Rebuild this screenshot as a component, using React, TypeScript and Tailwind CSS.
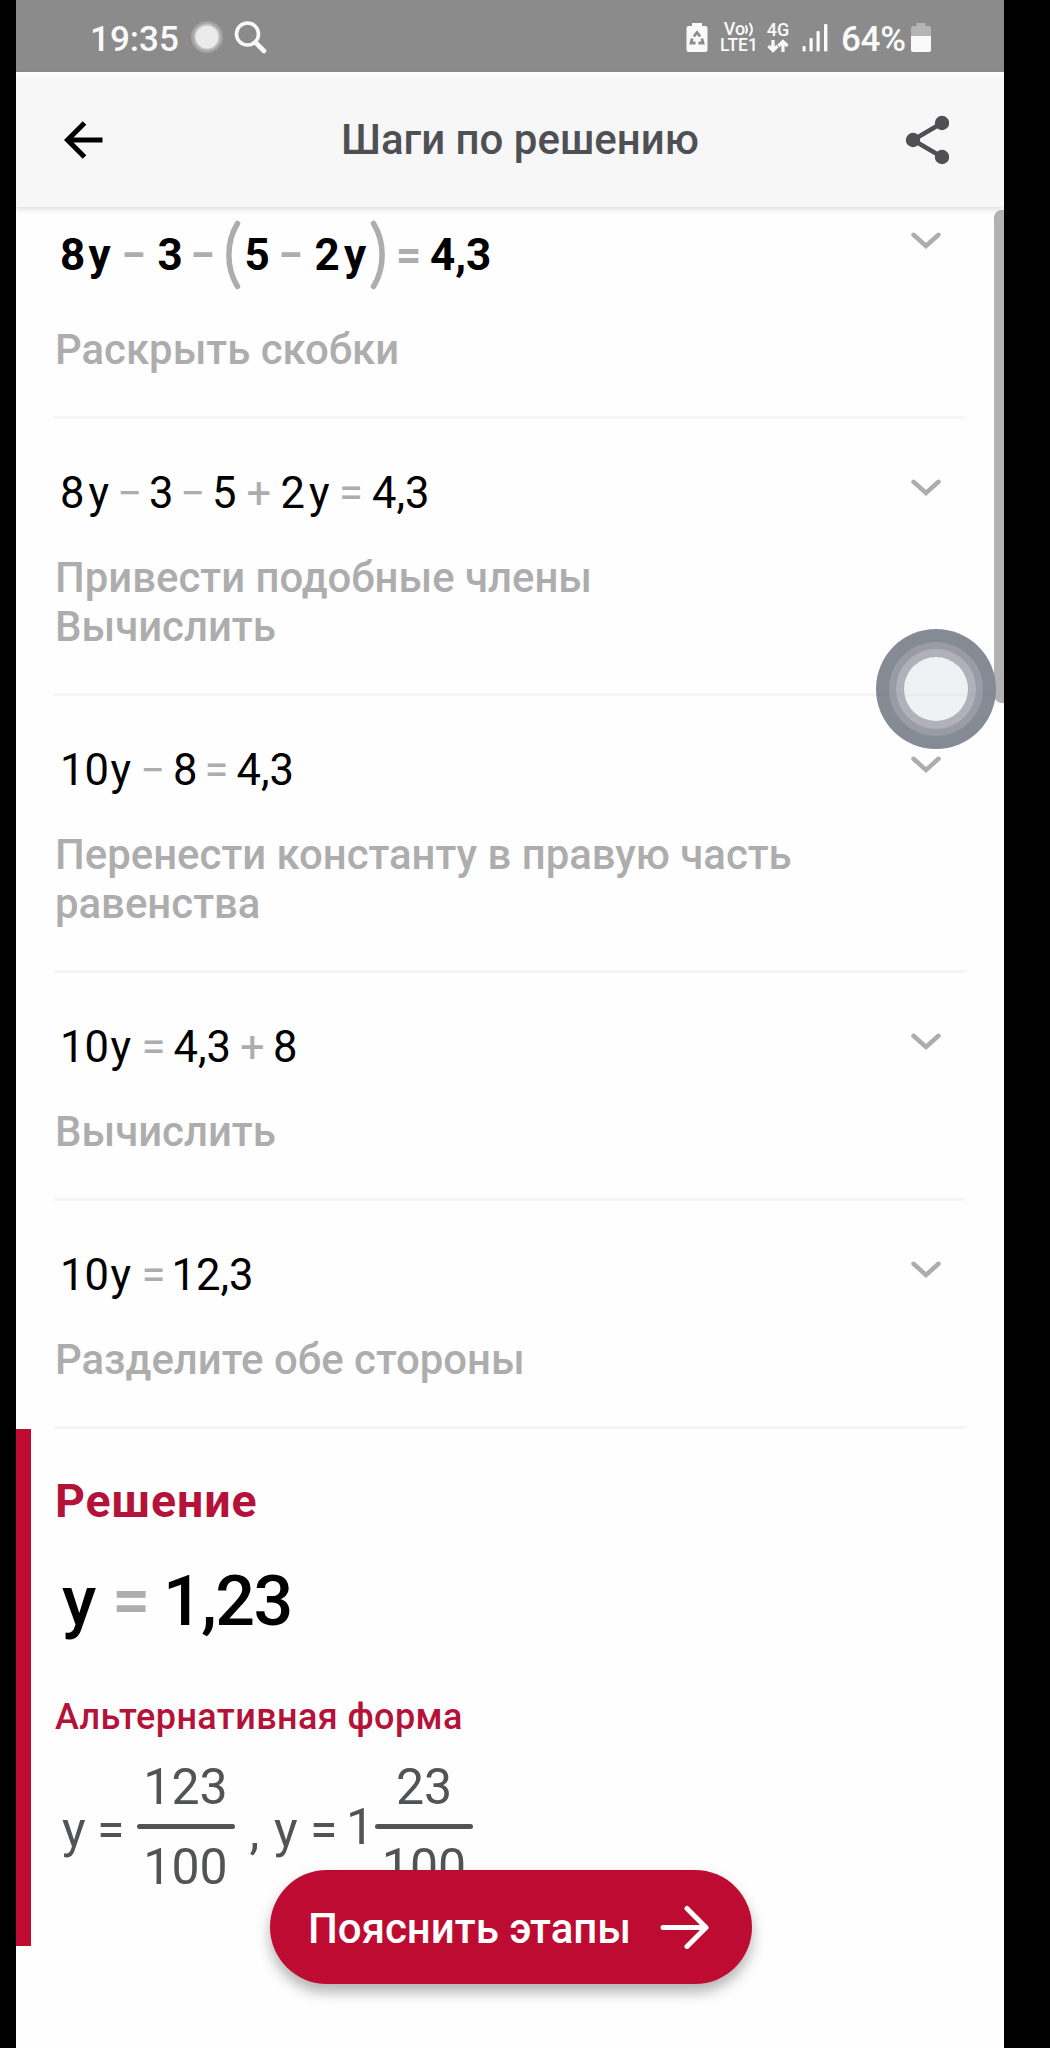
import { clsx } from "clsx";

type Token = {
  text: string;
  // distance to the start of the next token
  width: number;
  op?: boolean;
};

type Step = {
  tokens: Token[];
  description: string[];
};

const firstStep: Step = {
  tokens: [
    { text: "8", width: 28.5 },
    { text: "y", width: 33 },
    { text: "−", width: 36, op: true },
    { text: "3", width: 33 },
    { text: "−", width: 34, op: true },
    { text: "(", width: 20, op: true },
    { text: "5", width: 34 },
    { text: "−", width: 36, op: true },
    { text: "2", width: 29.5 },
    { text: "y", width: 26 },
    { text: ")", width: 26, op: true },
    { text: "=", width: 34, op: true },
    { text: "4,3", width: 60 },
  ],
  description: ["Раскрыть скобки"],
};

const steps: Step[] = [
  {
    tokens: [
      { text: "8", width: 28.5 },
      { text: "y", width: 29 },
      { text: "−", width: 31.5, op: true },
      { text: "3", width: 31.5 },
      { text: "−", width: 31.5, op: true },
      { text: "5", width: 34.5 },
      { text: "+", width: 34, op: true },
      { text: "2", width: 28.5 },
      { text: "y", width: 30 },
      { text: "=", width: 33, op: true },
      { text: "4,3", width: 60 },
    ],
    description: ["Привести подобные члены", "Вычислить"],
  },
  {
    tokens: [
      { text: "10", width: 50.5 },
      { text: "y", width: 30 },
      { text: "−", width: 32.5, op: true },
      { text: "8", width: 31.5 },
      { text: "=", width: 32, op: true },
      { text: "4,3", width: 60 },
    ],
    description: ["Перенести константу в правую часть", "равенства"],
  },
  {
    tokens: [
      { text: "10", width: 50.5 },
      { text: "y", width: 31 },
      { text: "=", width: 32, op: true },
      { text: "4,3", width: 66.5 },
      { text: "+", width: 33, op: true },
      { text: "8", width: 30 },
    ],
    description: ["Вычислить"],
  },
  {
    tokens: [
      { text: "10", width: 50.5 },
      { text: "y", width: 31 },
      { text: "=", width: 30, op: true },
      { text: "12,3", width: 90 },
    ],
    description: ["Разделите обе стороны"],
  },
];

function Paren({ closing }: { closing?: boolean }) {
  return (
    <svg
      viewBox="0 0 16 70"
      className={clsx("h-[70px] w-4", closing && "-scale-x-100")}
      fill="none"
      stroke="#adadad"
      strokeWidth="5.5"
      strokeLinecap="round"
    >
      <path d="M12.5 3.5C1 22 1 48 12.5 66.5" />
    </svg>
  );
}

function Equation({ tokens, bold }: { tokens: Token[]; bold?: boolean }) {
  return (
    <div
      className={clsx(
        "flex h-14 items-center pl-1.5 whitespace-nowrap text-black",
        bold
          ? "text-[44px] leading-[56px] font-bold"
          : "text-[43.5px] leading-[56px] pt-0.5"
      )}
    >
      {tokens.map((token, i) => (
        <span
          key={i}
          className={clsx("shrink-0", token.op && "text-[#adadad]")}
          style={{ width: token.width }}
        >
          {token.text === "(" || token.text === ")" ? (
            <Paren closing={token.text === ")"} />
          ) : (
            token.text
          )}
        </span>
      ))}
    </div>
  );
}

function Chevron() {
  return (
    <svg
      viewBox="0 0 30 18"
      className="mr-[24.5px] h-[18px] w-[30px] shrink-0"
      fill="none"
      stroke="#adadad"
      strokeWidth="4.5"
      strokeLinecap="round"
    >
      <path d="M2.5 2.8L15 14L27.5 2.8" />
    </svg>
  );
}

function StepRow({ step, first }: { step: Step; first?: boolean }) {
  return (
    <div
      className={clsx(
        "flex items-start justify-between border-b-3 border-[#f5f5f5] pb-[42px]",
        first ? "pt-5" : "pt-[46px]"
      )}
    >
      <div>
        <Equation tokens={step.tokens} bold={first} />
        <div
          className={clsx(
            "pl-px text-[41.9px] leading-[49px] font-medium text-[#adadad]",
            first ? "mt-[42px]" : "mt-8"
          )}
        >
          {step.description.map((line) => (
            <p key={line} className="whitespace-nowrap">
              {line}
            </p>
          ))}
        </div>
      </div>
      <div className={first ? "mt-[5px]" : "mt-[14px]"}>
        <Chevron />
      </div>
    </div>
  );
}

function StatusBar() {
  return (
    <div className="flex h-[72px] items-center bg-[#8b8b8b] pt-0.5 text-[#fafafa]">
      <span className="ml-[74px] w-[97px] pt-1.5 text-[35px] leading-[42px] font-medium">
        19:35
      </span>
      <svg viewBox="0 0 34 34" className="ml-[3px] h-[34px] w-[34px]">
        <circle cx="17" cy="17" r="16" fill="#a3a3a3" />
        <circle cx="17" cy="17" r="13.5" fill="#bebebe" />
        <circle cx="17" cy="17" r="11.5" fill="#ebebeb" />
      </svg>
      <svg
        viewBox="0 0 34 34"
        className="ml-[10px] h-[34px] w-[34px]"
        fill="none"
        stroke="#fafafa"
        strokeLinecap="round"
      >
        <circle cx="13.5" cy="14" r="11" strokeWidth="3.6" />
        <path d="M21.5 22.5L30 31" strokeWidth="4.6" />
      </svg>

      <div className="mr-[73px] ml-auto flex items-center">
        <svg viewBox="0 0 22 30" className="h-[30px] w-[22px]">
          <path
            d="M6 1h10v3h3.5a2 2 0 0 1 2 2v22a2 2 0 0 1-2 2h-17a2 2 0 0 1-2-2V6a2 2 0 0 1 2-2H6z"
            fill="#fafafa"
          />
          <g fill="none" stroke="#8b8b8b" strokeWidth="2.8">
            <path d="M7.8 14.5L11 10.500l3.200 4" />
            <path d="M15.8 16.500L17 21h-4.500" />
            <path d="M9.5 21H5l1.200-4.500" />
          </g>
        </svg>
        <div className="ml-[13px] flex w-9 flex-col items-center leading-4 font-medium">
          <span className="flex h-4 items-center text-[18px]">
            Vo
            <svg
              viewBox="0 0 9 16"
              className="h-4 w-[9px]"
              fill="none"
              stroke="#fafafa"
              strokeWidth="2"
            >
              <path d="M0.500 4.500Q3.500 8.500 0.500 12.500M4.500 2Q9.500 8.500 4.500 15" />
            </svg>
          </span>
          <span className="text-[17.5px]">LTE1</span>
        </div>
        <div className="ml-[9px] flex w-6 flex-col items-center font-medium">
          <span className="text-[18px] leading-4">4G</span>
          <svg
            viewBox="0 0 22 14"
            className="mt-px h-[14px] w-[22px]"
            fill="none"
            stroke="#fafafa"
            strokeWidth="3.2"
          >
            <path d="M6 1v10M1.5 7L6 11.5L10.5 7" />
            <path d="M16 13V3M11.5 7L16 2.5L20.5 7" />
          </svg>
        </div>
        <svg viewBox="0 0 26 30" className="ml-3 h-[30px] w-[26px]" fill="#fafafa">
          <rect x="0.5" y="24" width="3.2" height="5.5" rx="1" />
          <rect x="7.5" y="16" width="3.2" height="13.5" rx="1" />
          <rect x="14.5" y="9" width="3.2" height="20.5" rx="1" />
          <rect x="22" y="2" width="3.4" height="27.5" rx="1" />
        </svg>
        <span className="ml-[13px] w-[70px] pt-1.5 text-[35px] leading-[42px] font-medium tracking-[-0.3px]">
          64%
        </span>
        <svg viewBox="0 0 20 30" className="h-[30px] w-5">
          <path
            d="M5.5 1h9v3H18a2 2 0 0 1 2 2v9H0V6a2 2 0 0 1 2-2h3.5z"
            fill="#b4b4b4"
          />
          <path d="M0 14h20v14a2 2 0 0 1-2 2H2a2 2 0 0 1-2-2z" fill="#fafafa" />
        </svg>
      </div>
    </div>
  );
}

function Header() {
  return (
    <header className="relative z-10 flex h-[135px] items-center border-t-3 border-[#fcfcfc] bg-[#f7f7f8] pb-[3px] shadow-[0_2px_5px_rgba(0,0,0,0.14)]">
      <svg
        viewBox="0 0 40 38"
        className="ml-12 h-[38px] w-10"
        fill="none"
        stroke="#000"
        strokeWidth="5"
      >
        <path d="M38.5 19H4M20.5 2L3.5 19L20.5 36" />
      </svg>
      <h1 className="ml-[237px] pb-px text-[42px] font-medium text-[#4f5053]">
        Шаги по решению
      </h1>
      <svg viewBox="0 0 44 50" className="mr-[55px] ml-auto h-[50px] w-11">
        <path
          d="M37 8L8 25L37 42"
          fill="none"
          stroke="#4f4f54"
          strokeWidth="4.5"
        />
        <circle cx="8" cy="25" r="7.2" fill="#4f4f54" />
        <circle cx="37" cy="8" r="7.2" fill="#4f4f54" />
        <circle cx="37" cy="42" r="7.2" fill="#4f4f54" />
      </svg>
    </header>
  );
}

function Fraction({ top, bottom }: { top: string; bottom: string }) {
  return (
    <span className="flex w-[98px] flex-col items-center">
      <span className="h-[66px] leading-[59px]">{top}</span>
      <span className="h-[5px] w-full rounded-full bg-[#515356]" />
      <span className="h-[63px] leading-[76px]">{bottom}</span>
    </span>
  );
}

function Solution() {
  return (
    <section className="h-[517px] border-l-[15px] border-[#be0b32] pl-[23px]">
      <h2 className="pt-[45px] pl-px text-[46.5px] leading-[54px] font-bold tracking-[0.9px] text-[#b5123a]">
        Решение
      </h2>
      <div className="mt-[31px] flex pl-2 text-[70px] leading-[84px] font-medium text-black">
        <span className="w-[50px]">y</span>
        <span className="w-[51px] text-[68px] text-[#adadad]">=</span>
        <span className="tracking-[-1.6px]">1,23</span>
      </div>
      <h3 className="mt-[53px] pl-px text-[36px] leading-[42px] font-medium tracking-[0.4px] text-[#b5123a]">
        Альтернативная форма
      </h3>
      <div className="mt-5 flex h-[134px] items-center pl-2 text-[50px] leading-[60px] text-[#515356]">
        <span className="w-[35px] pt-2.5">y</span>
        <span className="w-[39.5px] pt-2.5">=</span>
        <Fraction top="123" bottom="100" />
        <span className="ml-[15px] w-[24.5px] pt-3">,</span>
        <span className="w-9 pt-2.5">y</span>
        <span className="w-9 pt-2.5">=</span>
        <span className="w-[29px] pt-1">1</span>
        <Fraction top="23" bottom="100" />
      </div>
    </section>
  );
}

function ExplainButton() {
  return (
    <button className="absolute top-[1870px] left-[253.5px] flex h-[114px] w-[482px] items-center rounded-full bg-[#be0b32] pl-[38.5px] text-[42px] font-medium text-white shadow-[0_8px_14px_rgba(0,0,0,0.3)]">
      <span className="w-[352px] pt-0.5 text-left whitespace-nowrap">
        Пояснить этапы
      </span>
      <svg
        viewBox="0 0 50 44"
        className="h-11 w-[50px]"
        fill="none"
        stroke="#fff"
        strokeWidth="5"
        strokeLinecap="round"
        strokeLinejoin="round"
      >
        <path d="M3 22.5H46M27 3.5L46 22.5L27 41.5" />
      </svg>
    </button>
  );
}

function AssistiveTouch() {
  return (
    <svg
      viewBox="0 0 120 120"
      className="absolute top-[629px] left-[860px] h-[120px] w-[120px]"
    >
      <circle cx="60" cy="60" r="60" fill="#858b95" />
      <circle cx="60" cy="60" r="47" fill="#999ca5" />
      <circle cx="60" cy="60" r="40" fill="#b1b2b9" />
      <circle cx="60" cy="60" r="32" fill="#f0f1f3" />
      <path d="M0 66H120" stroke="#000" strokeOpacity="0.02" strokeWidth="3" />
    </svg>
  );
}

export default function App() {
  return (
    <div className="h-[2048px] w-[1050px] overflow-hidden bg-black pl-4 font-['Roboto',sans-serif]">
      <div className="relative h-full w-[988px] overflow-hidden bg-[#fefefe]">
        <StatusBar />
        <Header />
        <main>
          <div className="pr-[39px] pl-[38px]">
            <StepRow step={firstStep} first />
            {steps.map((step) => (
              <StepRow key={step.description[0]} step={step} />
            ))}
          </div>
          <Solution />
        </main>
        <div className="absolute top-[210px] right-0 h-[493px] w-[10px] rounded-l-lg bg-[#b2b2b2]" />
        <AssistiveTouch />
        <ExplainButton />
      </div>
    </div>
  );
}
